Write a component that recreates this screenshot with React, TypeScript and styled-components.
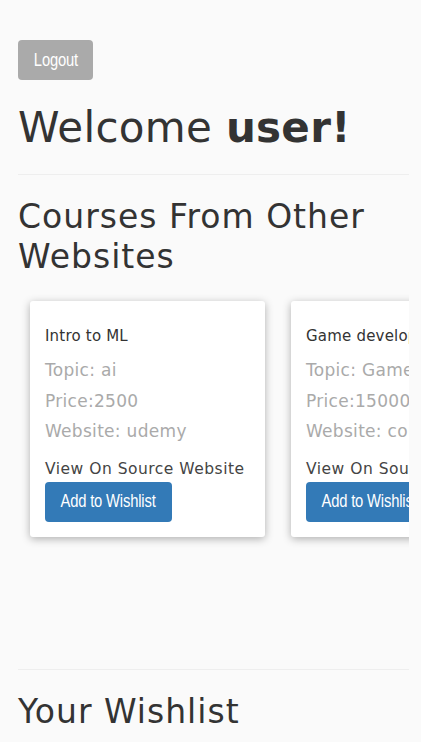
import React from "react";
import styled, { createGlobalStyle } from "styled-components";

const Global = createGlobalStyle`
  html, body { margin: 0; padding: 0; background: #fafafa; }
  body { font-family: "DejaVu Sans", "Noto Sans", sans-serif; color: #333; }
`;

const Page = styled.div`
  padding: 40px 12px 0 18px;
  overflow: hidden;
`;

const Narrow = styled.span`
  display: inline-block;
  transform: scaleX(0.82);
  transform-origin: center;
  font-family: "Liberation Sans", Arial, sans-serif;
  font-size: 18px;
  letter-spacing: -0.2px;
`;

const GreyButton = styled.button`
  display: flex;
  align-items: center;
  justify-content: center;
  width: 75px;
  height: 40px;
  border: none;
  border-radius: 4px;
  background: #aaaaaa;
  color: #fff;
  padding: 0;
`;

const Welcome = styled.h1`
  margin: 20px 0 0;
  font-size: 42px;
  line-height: 56px;
  font-weight: 400;
  color: #333;
  letter-spacing: 0.3px;
  b { font-weight: 700; }
`;

const Rule = styled.hr`
  border: none;
  border-top: 1px solid #eee;
  margin: ${(p: { $top: number }) => p.$top}px 0 0;
`;

const SectionTitle = styled.h2`
  margin: 22px 0 0;
  font-size: 33px;
  line-height: 40px;
  font-weight: 400;
  letter-spacing: 1px;
  color: #333;
`;

const Scroller = styled.div`
  display: flex;
  gap: 26px;
  padding: 24px 12px 0 12px;
  height: 260px;
  overflow: hidden;
`;

const Card = styled.div`
  flex: 0 0 235px;
  height: 236px;
  box-sizing: border-box;
  background: #fff;
  border-radius: 3px;
  box-shadow: 0 2px 8px rgba(0, 0, 0, 0.3);
  padding: 25px 15px 0;
  overflow: hidden;
`;

const CardTitle = styled.div`
  font-size: 15px;
  line-height: 20px;
  color: #333;
  letter-spacing: 0.2px;
  white-space: nowrap;
`;

const InfoList = styled.div`
  margin-top: 9px;
`;

const Info = styled.div`
  font-size: 17px;
  line-height: 30.5px;
  color: #aaa;
  letter-spacing: 0.3px;
  white-space: nowrap;
`;

const SourceLink = styled.div`
  margin-top: 12px;
  font-size: 15.5px;
  line-height: 20px;
  color: #444;
  letter-spacing: 0.5px;
  white-space: nowrap;
`;

const BlueButton = styled.button`
  display: flex;
  align-items: center;
  justify-content: center;
  margin-top: 3px;
  width: 127px;
  height: 40px;
  padding: 0;
  border: none;
  border-radius: 4px;
  background: #337ab7;
  color: #fff;
  white-space: nowrap;
`;

const courses = [
  { title: "Intro to ML", topic: "ai", price: "2500", site: "udemy" },
  { title: "Game development", topic: "Game Dev", price: "15000", site: "coursera" },
];

export default function App() {
  return (
    <Page>
      <Global />
      <GreyButton>
        <Narrow>Logout</Narrow>
      </GreyButton>
      <Welcome>
        Welcome <b>user!</b>
      </Welcome>
      <Rule $top={18} />
      <SectionTitle>Courses From Other Websites</SectionTitle>
      <Scroller>
        {courses.map((c) => (
          <Card key={c.title}>
            <CardTitle>{c.title}</CardTitle>
            <InfoList>
              <Info>Topic: {c.topic}</Info>
              <Info>Price:{c.price}</Info>
              <Info>Website: {c.site}</Info>
            </InfoList>
            <SourceLink>View On Source Website</SourceLink>
            <BlueButton>
              <Narrow>Add to Wishlist</Narrow>
            </BlueButton>
          </Card>
        ))}
      </Scroller>
      <Rule $top={108} />
      <SectionTitle>Your Wishlist</SectionTitle>
    </Page>
  );
}
